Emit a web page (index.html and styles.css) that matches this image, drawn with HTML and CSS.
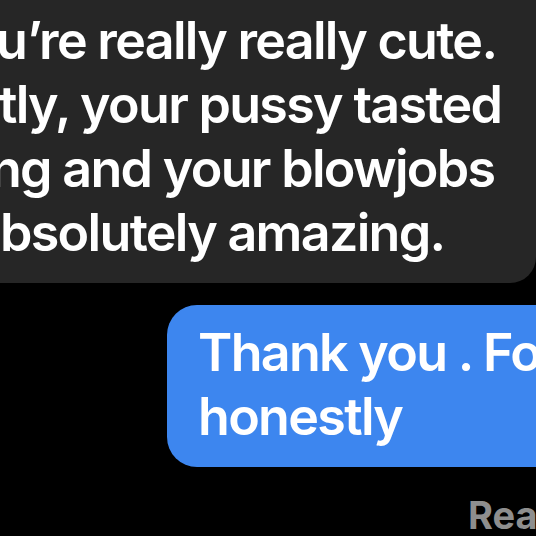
FILE: index.html
```html
<!DOCTYPE html>
<html>
<head>
<meta charset="utf-8">
<link rel="stylesheet" href="styles.css">
</head>
<body>
<div class="thread">
  <div class="bubble incoming">
    <div class="line l1">u’re really really cute.</div>
    <div class="line l2">tly, your pussy tasted</div>
    <div class="line l3">ng and your blowjobs</div>
    <div class="line l4">bsolutely amazing.</div>
  </div>
  <div class="bubble outgoing">
    <div class="line">Thank you . For</div>
    <div class="line">honestly</div>
  </div>
  <div class="receipt">Read</div>
</div>
</body>
</html>
```
FILE: styles.css
```css
html, body {
  margin: 0;
  padding: 0;
  background: #000;
  width: 536px;
  height: 536px;
  overflow: hidden;
}
.thread {
  display: flex;
  flex-direction: column;
  font-family: Inter, "Noto Sans", sans-serif;
  color: #fff;
}
.line {
  white-space: nowrap;
  font-size: 52px;
  line-height: 64px;
  font-weight: 600;
  letter-spacing: -1.7px;
}
.incoming {
  background: #262626;
  border-radius: 0 0 26px 0;
  padding: 9px 0 18px 0;
  width: 536px;
  overflow: hidden;
}
.l1 { margin-left: -4px; }
.l2 { margin-left: -1px; }
.l3 { margin-left: -10px; }
.l4 { margin-left: 0; }
.outgoing {
  background: #3d86ef;
  margin: 22px 0 0 167px;
  border-radius: 30px 0 0 30px;
  padding: 16px 0 18px 31px;
  width: 400px;
  overflow: hidden;
}
.receipt {
  margin: 25px 0 0 468px;
  font-size: 38px;
  line-height: 46px;
  font-weight: 700;
  color: #8e8e8e;
  white-space: nowrap;
}
```
